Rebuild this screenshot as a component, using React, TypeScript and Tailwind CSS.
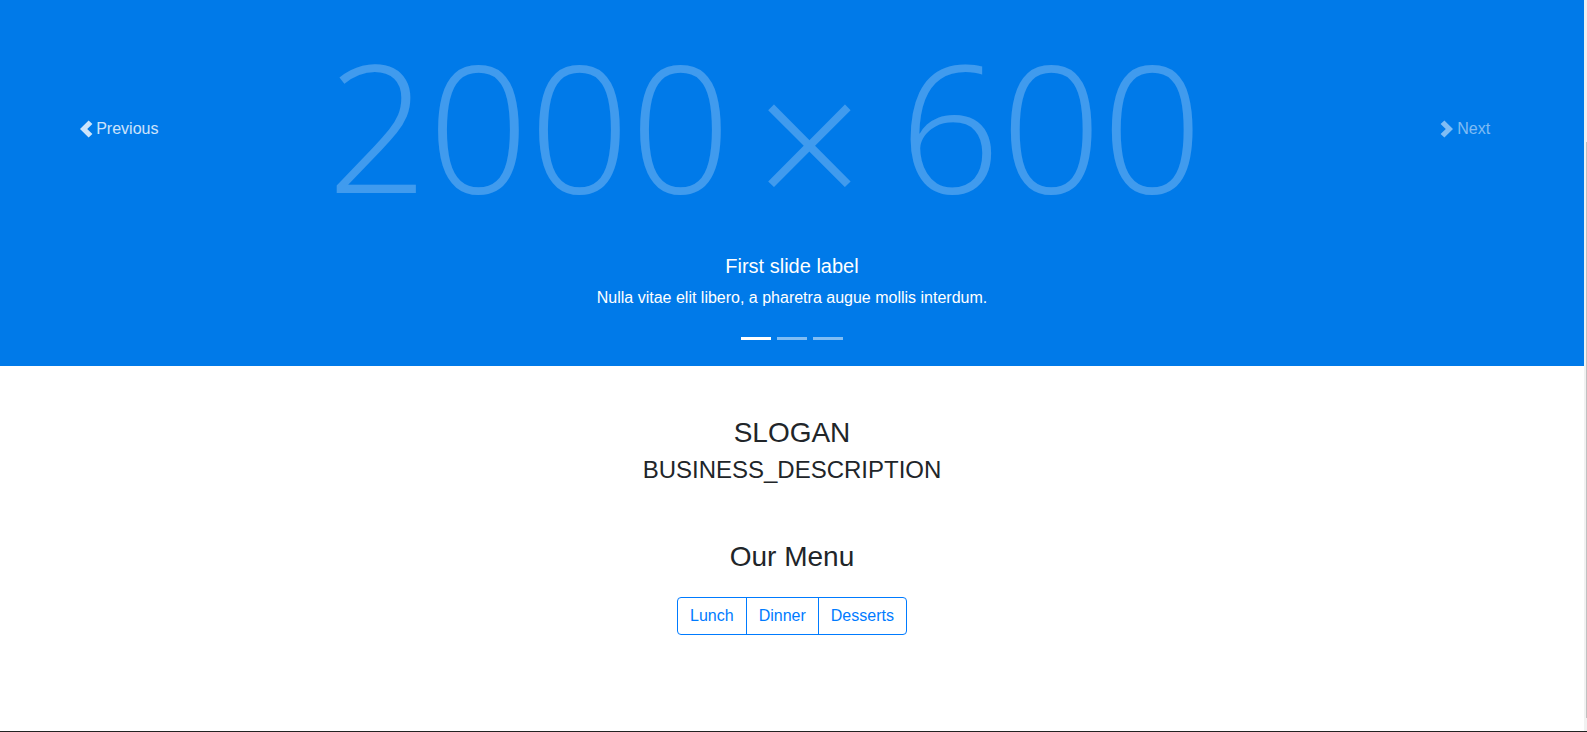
import React from "react";

function ChevronLeft() {
  return (
    <svg width="14" height="18" viewBox="0 0 14 18" className="shrink-0">
      <polygon points="9.6,0.4 13.4,3.9 8.2,9 13.4,14.1 9.6,17.6 1,9" fill="currentColor" />
    </svg>
  );
}

function ChevronRight() {
  return (
    <svg width="14" height="18" viewBox="0 0 14 18" className="shrink-0">
      <polygon points="4.4,0.4 0.6,3.9 5.8,9 0.6,14.1 4.4,17.6 13,9" fill="currentColor" />
    </svg>
  );
}

export default function App() {
  return (
    <div
      className="flex h-[732px] w-[1587px] flex-col overflow-hidden bg-white text-[#212529]"
      style={{ fontFamily: '"Liberation Sans", Arial, Helvetica, sans-serif' }}
    >
      <div className="flex h-[731px] flex-row">
        <div className="flex w-[1584px] flex-col">
          {/* Carousel */}
          <div className="relative h-[366px] w-full overflow-hidden bg-[#007ae9]">
            <div
              className="absolute left-[327px] top-[55px] flex items-start whitespace-nowrap font-light text-white/25"
              style={{ fontFamily: '"Open Sans", sans-serif' }}
            >
              <span className="text-[177px] leading-[140px]">2000</span>
              <span className="ml-[24px] mt-[25px] text-[190px] leading-[120px]">×</span>
              <span className="ml-[36px] text-[177px] leading-[140px]">600</span>
            </div>

            <div className="absolute left-0 top-0 flex h-[257px] w-[15%] items-center justify-center gap-[3px] text-white/80">
              <ChevronLeft />
              <span className="text-[16px] leading-6">Previous</span>
            </div>
            <div className="absolute right-0 top-0 flex h-[257px] w-[15%] items-center justify-center gap-[3px] text-white/50">
              <ChevronRight />
              <span className="text-[16px] leading-6">Next</span>
            </div>

            <div className="absolute bottom-[20px] left-[15%] right-[15%] py-5 text-center text-white">
              <h5 className="mb-2 text-[20px] font-normal leading-[1.2]">First slide label</h5>
              <p className="mb-4 text-[16px] leading-6">
                Nulla vitae elit libero, a pharetra augue mollis interdum.
              </p>
            </div>

            <div className="absolute bottom-0 left-0 right-0 mb-4 flex justify-center">
              <div className="mx-[3px] my-[10px] h-[3px] w-[30px] bg-white" />
              <div className="mx-[3px] my-[10px] h-[3px] w-[30px] bg-white/50" />
              <div className="mx-[3px] my-[10px] h-[3px] w-[30px] bg-white/50" />
            </div>
          </div>

          {/* Content */}
          <div className="flex flex-col items-center pt-[50px] text-center">
            <h3 className="text-[28px] font-normal leading-[1.2]">SLOGAN</h3>
            <h4 className="mt-[6px] text-[24px] font-normal leading-[1.2]">BUSINESS_DESCRIPTION</h4>
            <h3 className="mt-[56px] text-[28px] font-normal leading-[1.2]">Our Menu</h3>
            <div className="mt-[23px] flex">
              <button className="flex h-[38px] items-center rounded-l-[4px] border border-[#007bff] px-3 text-[16px] leading-6 text-[#007bff]">
                Lunch
              </button>
              <button className="-ml-px flex h-[38px] items-center border border-[#007bff] px-3 text-[16px] leading-6 text-[#007bff]">
                Dinner
              </button>
              <button className="-ml-px flex h-[38px] items-center rounded-r-[4px] border border-[#007bff] px-3 text-[16px] leading-6 text-[#007bff]">
                Desserts
              </button>
            </div>
          </div>
        </div>

        {/* Scrollbar strip */}
        <div className="flex w-[3px] flex-col bg-[#f1f1f1] pt-[142px]">
          <div className="ml-[2px] h-[576px] w-px bg-[#c1c1c1]" />
        </div>
      </div>
      <div className="h-px w-full bg-[#222222]" />
    </div>
  );
}
